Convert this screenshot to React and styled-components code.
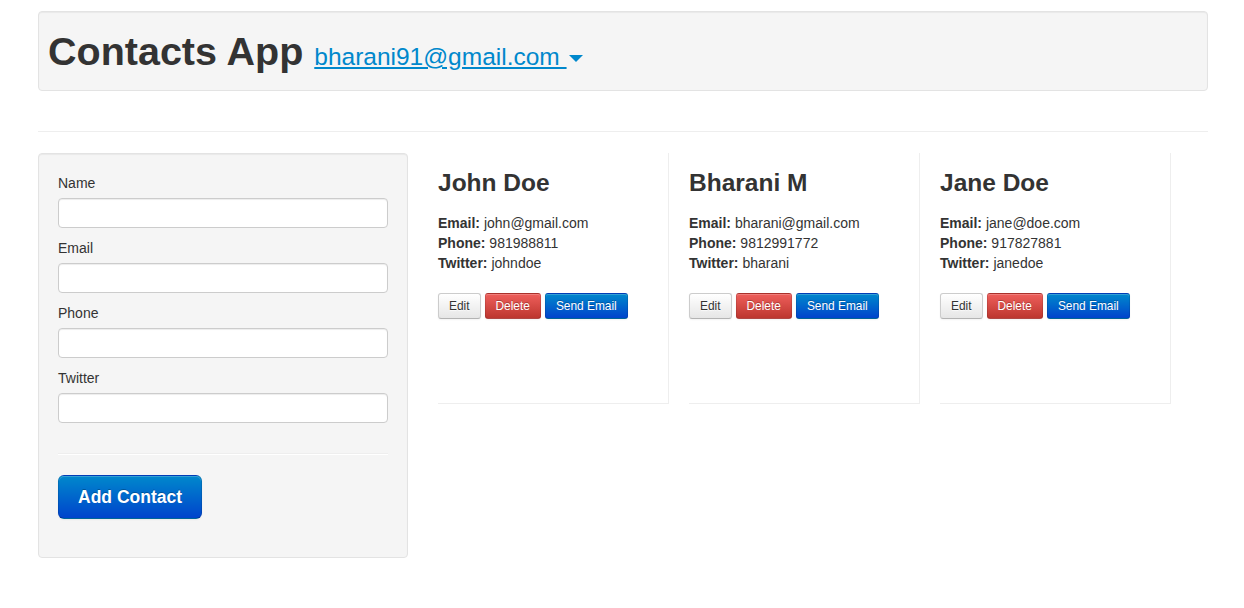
import styled, { createGlobalStyle } from 'styled-components';

const GlobalStyle = createGlobalStyle`
  * { box-sizing: border-box; }
  body {
    margin: 0;
    background: #fff;
    color: #333;
    font-family: "Liberation Sans", Arial, sans-serif;
    font-size: 14px;
    line-height: 20px;
  }
`;

const Container = styled.div`
  width: 1170px;
  margin: 0 0 0 38px;
  padding-top: 11px;
`;

// Top bar with title + account link
const Hero = styled.div`
  background: #f5f5f5;
  border: 1px solid #e3e3e3;
  border-radius: 4px;
  box-shadow: inset 0 1px 1px rgba(0, 0, 0, 0.05);
  padding: 19px 9px 19px;
`;

const Title = styled.h1`
  margin: 0;
  font-size: 39.5px;
  line-height: 40px;
  font-weight: bold;
  color: #333;
  white-space: nowrap;
`;

const Account = styled.a`
  font-size: 24.5px;
  line-height: 1;
  font-weight: normal;
  color: #0088cc;
  text-decoration: underline;
  cursor: pointer;
`;

const Caret = styled.span`
  display: inline-block;
  width: 0;
  height: 0;
  margin-left: 2px;
  vertical-align: middle;
  border-top: 7px solid #0088cc;
  border-left: 7px solid transparent;
  border-right: 7px solid transparent;
`;

const Rule = styled.hr`
  margin: 40px 0 20px;
  border: 0;
  border-top: 1px solid #eee;
  border-bottom: 1px solid #fff;
`;

const Row = styled.div`
  display: flex;
  align-items: flex-start;
  gap: 30px;
`;

// Left form panel
const Well = styled.form`
  width: 370px;
  flex-shrink: 0;
  background: #f5f5f5;
  border: 1px solid #e3e3e3;
  border-radius: 4px;
  box-shadow: inset 0 1px 1px rgba(0, 0, 0, 0.05);
  padding: 19px;
`;

const Label = styled.label`
  display: block;
  margin-bottom: 5px;
  font-size: 14px;
  line-height: 20px;
`;

const Input = styled.input`
  display: block;
  width: 100%;
  height: 30px;
  margin: 0 0 10px;
  padding: 4px 6px;
  font: inherit;
  background: #fff;
  border: 1px solid #ccc;
  border-radius: 4px;
  box-shadow: inset 0 1px 1px rgba(0, 0, 0, 0.075);
  outline: none;
`;

const FormRule = styled.hr`
  margin: 30px 0 20px;
  border: 0;
  border-top: 1px solid #eee;
  border-bottom: 1px solid #fff;
`;

const BigButton = styled.button`
  display: block;
  margin-bottom: 19px;
  padding: 11px 19px;
  font-family: inherit;
  font-size: 17.5px;
  font-weight: bold;
  line-height: 20px;
  color: #fff;
  text-shadow: 0 -1px 0 rgba(0, 0, 0, 0.25);
  background: linear-gradient(to bottom, #0088cc, #0044cc);
  border: 1px solid;
  border-color: rgba(0, 0, 0, 0.1) rgba(0, 0, 0, 0.1) rgba(0, 0, 0, 0.25);
  border-radius: 6px;
  box-shadow: inset 0 1px 0 rgba(255, 255, 255, 0.2), 0 1px 2px rgba(0, 0, 0, 0.05);
`;

// Contact cards
const Cards = styled.div`
  display: flex;
  gap: 20px;
`;

const Card = styled.div`
  width: 231px;
  height: 251px;
  border-right: 1px solid #eee;
  border-bottom: 1px solid #eee;
`;

const Name = styled.h3`
  margin: 10px 0;
  font-size: 24.5px;
  line-height: 40px;
  font-weight: bold;
`;

const Details = styled.p`
  margin: 0 0 20px;
  b { font-weight: bold; }
`;

const Actions = styled.div`
  display: flex;
  gap: 4px;
`;

const tones = {
  default: `
    color: #333;
    text-shadow: 0 1px 1px rgba(255,255,255,.75);
    background: linear-gradient(to bottom, #ffffff, #e6e6e6);
    border-color: #ccc #ccc #b3b3b3;
  `,
  danger: `
    color: #fff;
    text-shadow: 0 -1px 0 rgba(0,0,0,.25);
    background: linear-gradient(to bottom, #ee5f5b, #bd362f);
    border-color: rgba(0,0,0,.1) rgba(0,0,0,.1) rgba(0,0,0,.25);
  `,
  primary: `
    color: #fff;
    text-shadow: 0 -1px 0 rgba(0,0,0,.25);
    background: linear-gradient(to bottom, #0088cc, #0044cc);
    border-color: rgba(0,0,0,.1) rgba(0,0,0,.1) rgba(0,0,0,.25);
  `,
};

const SmallButton = styled.button`
  padding: 2px 10px;
  font-family: inherit;
  font-size: 11.9px;
  line-height: 20px;
  border: 1px solid;
  border-radius: 3px;
  box-shadow: inset 0 1px 0 rgba(255, 255, 255, 0.2), 0 1px 2px rgba(0, 0, 0, 0.05);
  ${(p) => tones[p.$tone || 'default']}
`;

const contacts = [
  { name: 'John Doe', email: 'john@gmail.com', phone: '981988811', twitter: 'johndoe' },
  { name: 'Bharani M', email: 'bharani@gmail.com', phone: '9812991772', twitter: 'bharani' },
  { name: 'Jane Doe', email: 'jane@doe.com', phone: '917827881', twitter: 'janedoe' },
];

export default function App() {
  return (
    <>
      <GlobalStyle />
      <Container>
        <Hero>
          <Title>
            Contacts App <Account>bharani91@gmail.com <Caret /></Account>
          </Title>
        </Hero>
        <Rule />
        <Row>
          <Well onSubmit={(e) => e.preventDefault()}>
            <Label>Name</Label>
            <Input type="text" />
            <Label>Email</Label>
            <Input type="text" />
            <Label>Phone</Label>
            <Input type="text" />
            <Label>Twitter</Label>
            <Input type="text" />
            <FormRule />
            <BigButton>Add Contact</BigButton>
          </Well>
          <Cards>
            {contacts.map((c) => (
              <Card key={c.name}>
                <Name>{c.name}</Name>
                <Details>
                  <b>Email:</b> {c.email}
                  <br />
                  <b>Phone:</b> {c.phone}
                  <br />
                  <b>Twitter:</b> {c.twitter}
                </Details>
                <Actions>
                  <SmallButton>Edit</SmallButton>
                  <SmallButton $tone="danger">Delete</SmallButton>
                  <SmallButton $tone="primary">Send Email</SmallButton>
                </Actions>
              </Card>
            ))}
          </Cards>
        </Row>
      </Container>
    </>
  );
}
